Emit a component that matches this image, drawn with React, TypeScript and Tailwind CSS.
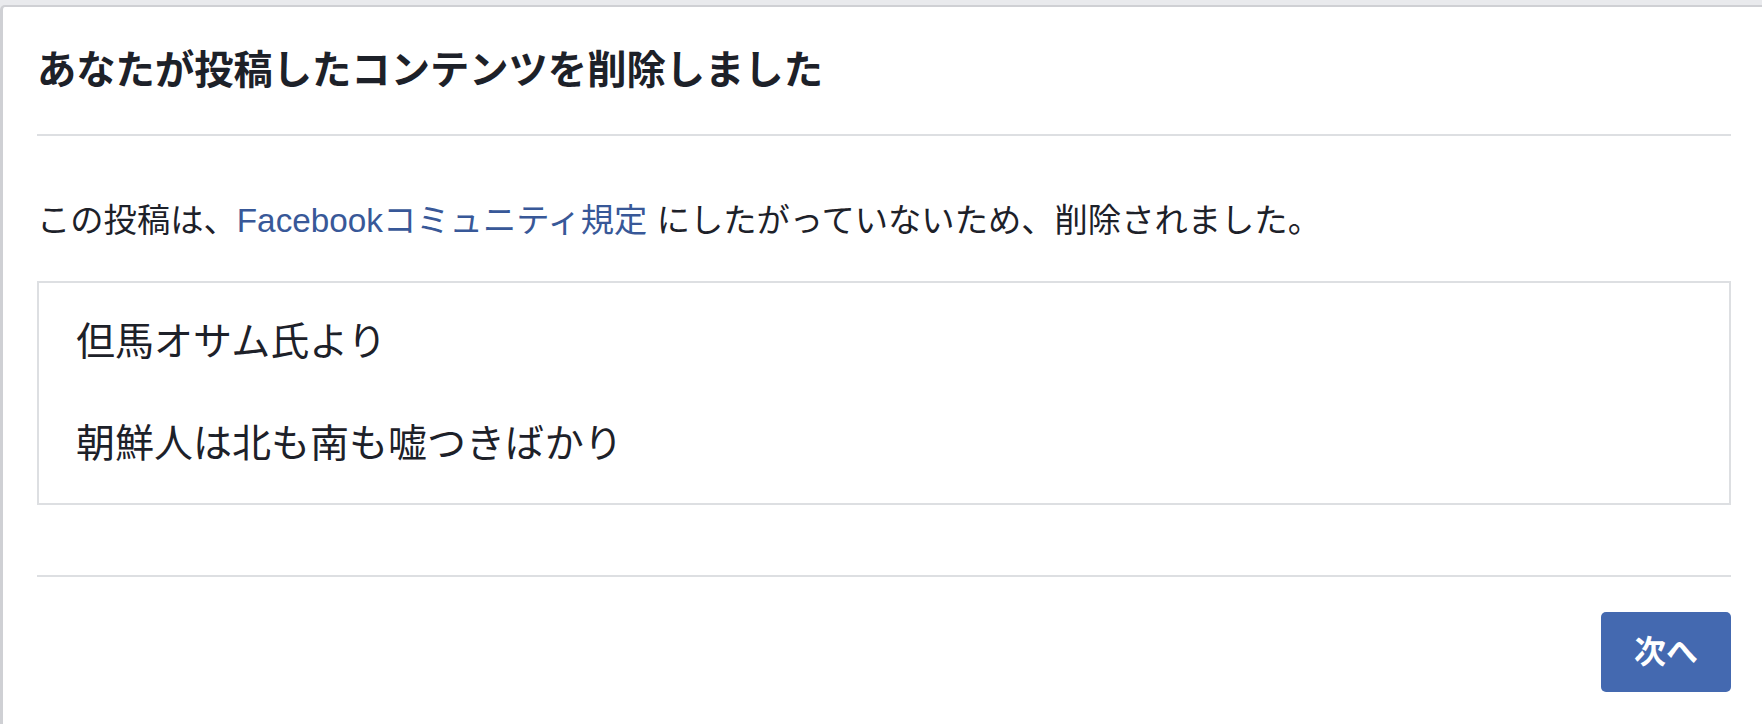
const font = "font-['Liberation_Sans','Noto_Sans_CJK_JP',sans-serif]";

function Divider() {
  return <div className="h-[2px] bg-[#dddfe2]" />;
}

export default function App() {
  return (
    <div className={`min-h-[724px] bg-[#e9eaed] pt-[5px] ${font}`}>
      <div className="min-h-[719px] rounded-tl-[5px] border-t-2 border-l-[3px] border-[#cfd0d4] bg-white pl-[34px] pr-[31px] pt-[39px]">
        <h1 className="text-[39.3px] font-bold leading-[48px] text-[#1d2129]">
          あなたが投稿したコンテンツを削除しました
        </h1>
        <div className="mt-[40px]">
          <Divider />
        </div>

        <p className="mt-[63px] text-[33.3px] leading-[44px] text-[#1d2129]">
          この投稿は、
          <a href="#" className="text-[#385898]">
            Facebookコミュニティ規定
          </a>{" "}
          にしたがっていないため、削除されました。
        </p>

        <div className="mt-[38px] flex flex-col gap-[50px] border-2 border-[#dddfe2] px-[37px] py-[33px] text-[39px] leading-[52px] text-[#1d2129]">
          <p>但馬オサム氏より</p>
          <p>朝鮮人は北も南も嘘つきばかり</p>
        </div>

        <div className="mt-[70px]">
          <Divider />
        </div>

        <div className="mt-[35px] flex justify-end">
          <button className="flex h-[80px] w-[130px] items-center justify-center rounded-[5px] bg-[#4469b0] text-[32px] font-bold text-white">
            次へ
          </button>
        </div>
      </div>
    </div>
  );
}
